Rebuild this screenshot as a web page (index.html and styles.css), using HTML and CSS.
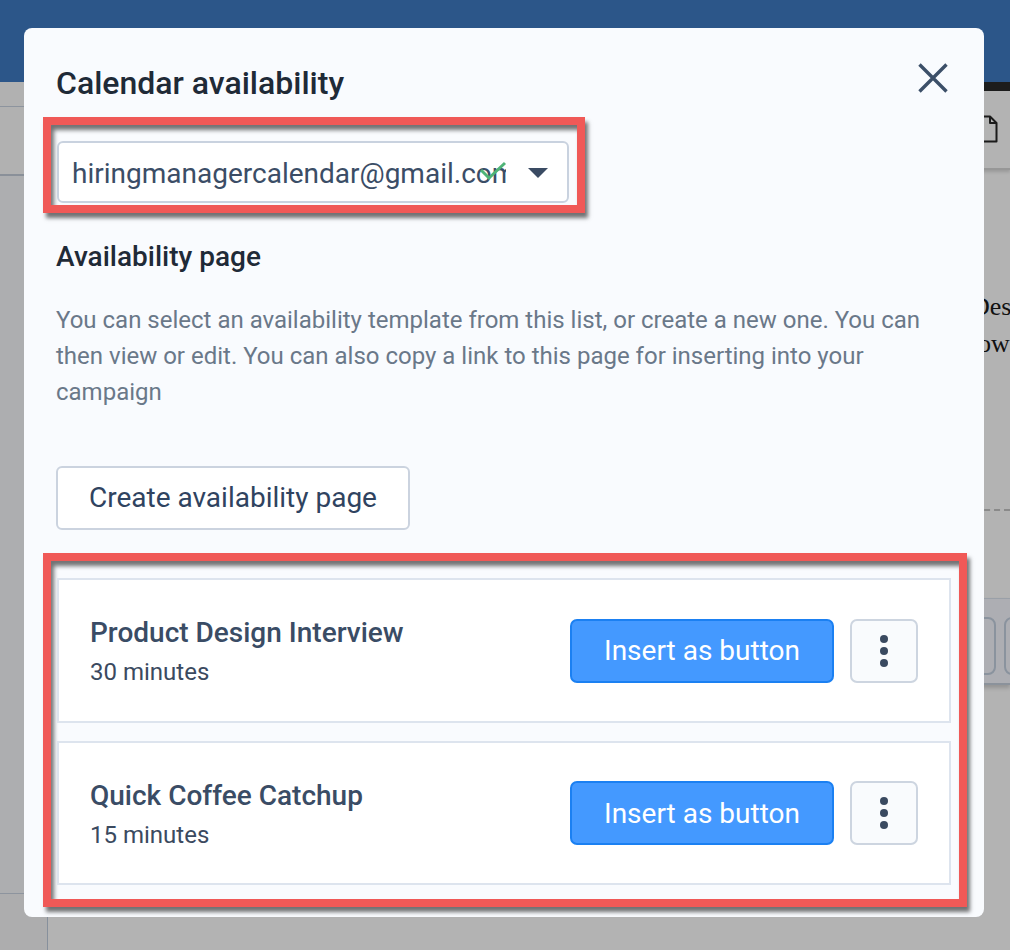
FILE: index.html
```html
<!DOCTYPE html>
<html lang="en">
<head>
<meta charset="utf-8">
<title>Calendar availability</title>
<link rel="stylesheet" href="styles.css">
</head>
<body>
<div class="app">
  <header class="topbar"></header>
  <div class="workspace">
    <aside class="sidebar">
      <div class="side-a"></div>
      <div class="side-b"></div>
      <div class="side-c"></div>
      <div class="side-d"></div>
    </aside>
    <main class="main">
      <div class="blackbar"></div>
      <div class="docbar">
        <svg class="doc-icon" width="22" height="28" viewBox="0 0 22 28"><path d="M1.5 1.5 H14 L20.5 8 V26.5 H1.5 Z M14 1.5 V8 H20.5" fill="none" stroke="#1b1b1b" stroke-width="2" stroke-linejoin="round"/></svg>
      </div>
      <div class="editor">
        <div class="ed-line ed-l1">Design</div>
        <div class="ed-line ed-l2">follow</div>
      </div>
      <div class="gap-area"></div>
      <div class="toolbar">
        <span class="tb-btn"></span>
        <span class="tb-btn"></span>
      </div>
    </main>
  </div>
</div>

<div class="modal">
  <h1 class="modal-title">Calendar availability</h1>
  <button class="close-btn" aria-label="Close">
    <svg width="30" height="30" viewBox="0 0 30 30"><path d="M1.5 1.5 L28.5 28.5 M28.5 1.5 L1.5 28.5" stroke="#3c4f68" stroke-width="3.4" stroke-linecap="butt"/></svg>
  </button>

  <div class="mark mark-select">
    <div class="select">
      <span class="select-text">hiringmanagercalendar@gmail.com</span>
      <svg class="select-check" width="28" height="20" viewBox="0 0 28 20"><path d="M2 9 L10 17 L26 2" fill="none" stroke="#4fb477" stroke-width="3"/></svg>
      <svg class="select-caret" width="20" height="10" viewBox="0 0 20 10"><path d="M0 0 H20 L10 10 Z" fill="#3a4b63"/></svg>
    </div>
  </div>

  <h2 class="section-title">Availability page</h2>
  <p class="section-text">You can select an availability template from this list, or create a new one. You can then view or edit. You can also copy a link to this page for inserting into your campaign</p>

  <button class="btn-outline">Create availability page</button>

  <div class="mark mark-list">
    <div class="card">
      <div class="card-info">
        <div class="card-title">Product Design Interview</div>
        <div class="card-sub">30 minutes</div>
      </div>
      <div class="card-actions">
        <button class="btn-primary">Insert as button</button>
        <button class="btn-kebab" aria-label="More"><span class="dot"></span><span class="dot"></span><span class="dot"></span></button>
      </div>
    </div>
    <div class="card">
      <div class="card-info">
        <div class="card-title">Quick Coffee Catchup</div>
        <div class="card-sub">15 minutes</div>
      </div>
      <div class="card-actions">
        <button class="btn-primary">Insert as button</button>
        <button class="btn-kebab" aria-label="More"><span class="dot"></span><span class="dot"></span><span class="dot"></span></button>
      </div>
    </div>
  </div>
</div>
</body>
</html>
```

FILE: styles.css
```css
* { box-sizing: border-box; }

html, body {
  margin: 0;
  padding: 0;
  width: 1010px;
  height: 950px;
  overflow: hidden;
  background: #adaeb0;
  font-family: "Roboto", "Liberation Sans", sans-serif;
}

/* ---------- dimmed background app ---------- */
.app {
  display: flex;
  flex-direction: column;
  height: 950px;
}

.topbar {
  height: 82px;
  background: #2c5689;
  flex: none;
}

.workspace {
  flex: 1;
  display: flex;
  min-height: 0;
}

.sidebar {
  width: 48px;
  flex: none;
  display: flex;
  flex-direction: column;
  border-right: 1px solid #87909c;
}

.side-a {
  height: 25px;
  background: #b1b1b1;
  border-bottom: 1px solid #8d949e;
}

.side-b {
  height: 69px;
  background: #b1b1b1;
  border-bottom: 2px solid #8a9099;
}

.side-c {
  height: 718px;
  background: #adaeb0;
  border-bottom: 1px solid #8d949e;
}

.side-d {
  flex: 1;
  background: #adadae;
}

.main {
  flex: 1;
  display: flex;
  flex-direction: column;
  overflow: hidden;
  background: #b3b3b3;
}

.blackbar {
  height: 9px;
  background: #1d1d1d;
  flex: none;
}

.docbar {
  height: 79px;
  flex: none;
  background: #b3b3b3;
  border-bottom: 2px solid #979797;
  box-shadow: 0 2px 3px rgba(0, 0, 0, 0.15);
  padding: 24px 0 0 928px;
}

.doc-icon { display: block; }

.editor {
  height: 341px;
  flex: none;
  padding-top: 118px;
  border-bottom: 2px dashed #8a8a8a;
  font-family: "Liberation Serif", "Times New Roman", serif;
  font-size: 26px;
  line-height: 37px;
  color: #111;
  white-space: nowrap;
}

.ed-l1 { padding-left: 923px; }
.ed-l2 { padding-left: 894px; }

.gap-area {
  height: 87px;
  flex: none;
  background: #b3b3b3;
}

.toolbar {
  height: 87px;
  flex: none;
  background: #adaeb3;
  border-top: 1px solid #9aa0a8;
  border-bottom: 2px solid #8b929b;
  box-shadow: 0 3px 4px rgba(0, 0, 0, 0.18);
  display: flex;
  gap: 8px;
  padding: 18px 0 0 920px;
}

.tb-btn {
  width: 28px;
  height: 58px;
  border: 2px solid #8a939e;
  border-radius: 8px;
  flex: none;
}

/* ---------- modal ---------- */
.modal {
  position: fixed;
  left: 24px;
  top: 28px;
  width: 960px;
  height: 889px;
  background: #f9fbfe;
  border-radius: 8px;
  padding: 0 32px;
}

.modal-title {
  margin: 37px 0 0;
  font-size: 32px;
  line-height: 36px;
  font-weight: 500;
  color: #1f2a37;
}

.close-btn {
  position: absolute;
  top: 35px;
  right: 36px;
  width: 30px;
  height: 30px;
  padding: 0;
  border: 0;
  background: none;
}

.close-btn svg { display: block; }

/* red annotation frames */
.mark {
  border: 8px solid #f05957;
  box-shadow: 3px 5px 4px rgba(0, 0, 0, 0.55), inset 3px 5px 4px rgba(0, 0, 0, 0.55);
}

.mark-select {
  width: 542px;
  margin: 16px 0 0 -13px;
  padding: 16px 8px 2px 6px;
}

.select {
  position: relative;
  width: 512px;
  height: 62px;
  background: #ffffff;
  border: 2px solid #c9d2df;
  border-radius: 6px;
  padding-left: 13px;
}

.select-text {
  display: block;
  width: 434px;
  overflow: hidden;
  white-space: nowrap;
  padding-top: 2px;
  font-size: 28px;
  line-height: 58px;
  color: #3b4d66;
}

.select-check {
  position: absolute;
  left: 420px;
  top: 18px;
}

.select-caret {
  position: absolute;
  left: 469px;
  top: 25px;
}

.section-title {
  margin: 28px 0 0;
  font-size: 28px;
  line-height: 32px;
  font-weight: 500;
  color: #1f2a37;
}

.section-text {
  margin: 29px 0 0;
  font-size: 24px;
  line-height: 36px;
  color: #6a7889;
}

.btn-outline {
  display: block;
  margin-top: 56px;
  height: 64px;
  padding: 0 31px;
  background: #ffffff;
  border: 2px solid #cbd3df;
  border-radius: 6px;
  font-family: inherit;
  font-size: 28px;
  line-height: 60px;
  color: #2f4360;
}

.mark-list {
  margin: 23px -15px 0 -13px;
  padding: 17px 8px 14px 6px;
  display: flex;
  flex-direction: column;
  gap: 18px;
}

.card {
  height: 145px;
  background: #ffffff;
  border: 2px solid #dde4ee;
  display: flex;
  align-items: center;
  justify-content: space-between;
  padding: 0 31px;
}

.card + .card { height: 144px; }

.card-info {
  padding-top: 2px;
}

.card-title {
  font-size: 28px;
  line-height: 36px;
  font-weight: 500;
  color: #3a4c65;
  margin-bottom: 5px;
}

.card-sub {
  font-size: 24px;
  line-height: 32px;
  color: #3b4a5f;
}

.card-actions {
  display: flex;
  gap: 16px;
}

.btn-primary {
  width: 264px;
  height: 64px;
  padding: 0;
  background: #4499ff;
  border: 2px solid #1b80f2;
  border-radius: 7px;
  font-family: inherit;
  font-size: 28px;
  color: #ffffff;
}

.btn-kebab {
  width: 68px;
  height: 64px;
  padding: 0;
  background: #f9fbfd;
  border: 2px solid #cdd5e0;
  border-radius: 7px;
  display: flex;
  flex-direction: column;
  align-items: center;
  justify-content: center;
  gap: 4px;
}

.dot {
  width: 8px;
  height: 8px;
  border-radius: 50%;
  background: #3a4a60;
}
```
